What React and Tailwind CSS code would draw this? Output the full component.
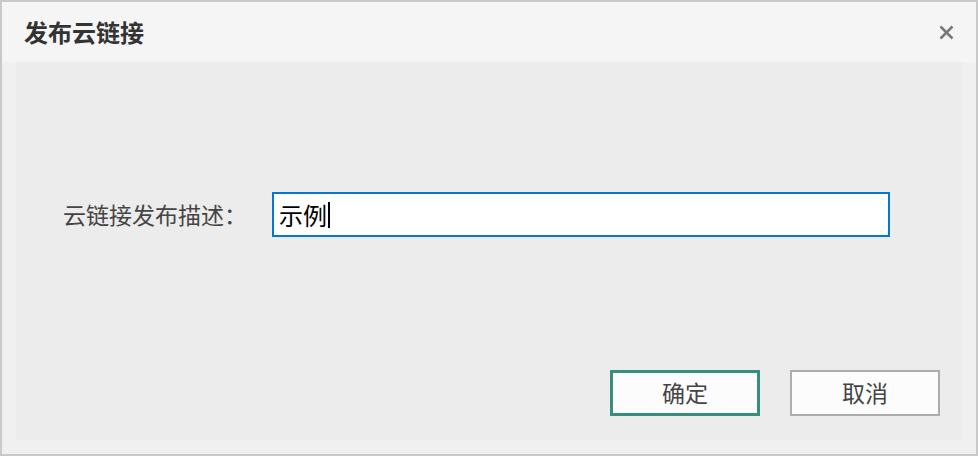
export default function App() {
  const font = { fontFamily: '"Noto Sans CJK SC", "Noto Sans", sans-serif' };

  return (
    <div
      className="w-[978px] h-[456px] border-2 border-[#c9c9c9] bg-[#f0f0f0] flex flex-col"
      style={font}
    >
      {/* Title bar */}
      <div className="h-[60px] bg-[#f5f5f5] flex items-center justify-between pl-[22px] pr-[22px]">
        <h1 className="text-[24px] font-bold text-[#333] leading-none">发布云链接</h1>
        <button type="button" className="w-[15px] h-[15px] flex items-center justify-center">
          <svg viewBox="0 0 15 15" className="w-[15px] h-[15px]" fill="none" stroke="#777" strokeWidth={2.5}>
            <path d="M1.5 1.5l12 12M13.5 1.5l-12 12" />
          </svg>
        </button>
      </div>

      {/* Body */}
      <div className="flex-1 flex px-[14px] pb-[14px]">
        <div className="flex-1 bg-[#ececec] flex flex-col">
          <div className="flex items-center pl-[47px] pt-[130px]">
            <label className="w-[209px] text-[23px] text-[#444] leading-none">云链接发布描述：</label>
            <div className="w-[618px] h-[45px] border-2 border-[#0078d7] bg-white flex items-center pl-[5px]">
              <span className="text-[24px] text-black leading-none">示例</span>
              <span className="w-[2px] h-[26px] bg-black ml-[1px]" />
            </div>
          </div>

          <div className="flex-1" />

          <div className="flex justify-end gap-[30px] pr-[22px] pb-[24px]">
            <button
              type="button"
              className="w-[150px] h-[46px] border-[3px] border-[#358f7d] bg-[#fcfcfc] text-[23px] text-[#444] leading-none pb-[2px]"
            >
              确定
            </button>
            <button
              type="button"
              className="w-[150px] h-[46px] border-2 border-[#adadad] bg-[#fcfcfc] text-[23px] text-[#444] leading-none pb-[2px]"
            >
              取消
            </button>
          </div>
        </div>
      </div>
    </div>
  );
}
